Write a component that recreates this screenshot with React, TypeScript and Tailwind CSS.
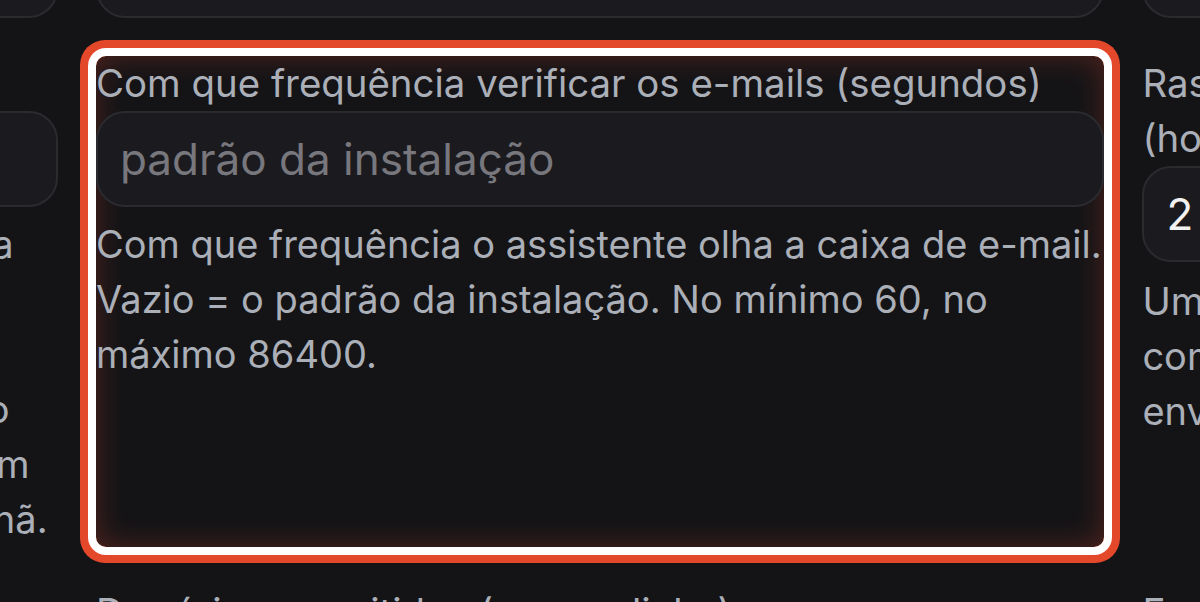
import React from 'react';

// Campo em foco, mostrado com zoom sobre a grade de configurações
const font = { fontFamily: 'Inter, "Noto Sans", sans-serif' };

function Input({ placeholder, value }: { placeholder?: string; value?: string }) {
  return (
    <div className="flex h-[96px] items-center rounded-[29px] border-2 border-[#2a2a2f] bg-[#1b1b1f] px-[22px]">
      {value ? (
        <span className="text-[44px] text-[#f2f2f2]">{value}</span>
      ) : (
        <span className="text-[44px] text-[#77777d]">{placeholder}</span>
      )}
    </div>
  );
}

function Lines({ lines }: { lines: { text: string; pr: string }[] }) {
  return (
    <div className="mt-[9.6px] text-[38px] leading-[55px] text-[#abafb7]">
      {lines.map((l, i) => (
        <span key={i} className={`block whitespace-nowrap text-right ${l.pr}`}>
          {l.text}
        </span>
      ))}
    </div>
  );
}

export default function App() {
  return (
    <div className="h-[602px] w-[1200px] overflow-hidden bg-[#141417]" style={font}>
      <div className="flex justify-center">
        <div className="mt-[-78px] grid shrink-0 grid-cols-[1008px_1008px_1008px] gap-x-[38.4px] gap-y-[38.4px]">
          {/* linha anterior */}
          <div className="h-[96px] rounded-[29px] border-2 border-[#2a2a2f] bg-[#1b1b1f]" />
          <div className="h-[96px] rounded-[29px] border-2 border-[#2a2a2f] bg-[#1b1b1f]" />
          <div className="h-[96px] rounded-[29px] border-2 border-[#2a2a2f] bg-[#1b1b1f]" />

          {/* coluna da esquerda */}
          <div className="flex flex-col">
            <label className="text-[38.4px] leading-[55px] text-[#abafb7]">Hora do resumo</label>
            <Input placeholder="08:00" />
            <Lines
              lines={[
                { text: 'O resumo chega na caixa de entrada', pr: 'pr-[44px]' },
                { text: 'logo cedo, antes do expediente,', pr: 'pr-[1040px]' },
                { text: 'mesmo nos fins de semana,', pr: 'pr-[1040px]' },
                { text: 'no fuso horário do perfil do', pr: 'pr-[48px]' },
                { text: 'usuário. Se ficar vazio, nenhum', pr: 'pr-[28px]' },
                { text: 'resumo sai até amanhã.', pr: 'pr-[10px]' },
              ]}
            />
          </div>

          {/* campo em foco */}
          <div className="flex flex-col rounded-[10px] shadow-[0_0_0_8px_#ffffff,0_0_0_16px_#e4482a,inset_0_0_30px_rgba(228,72,42,0.3)]">
            <label className="whitespace-nowrap text-[38.4px] leading-[55px] text-[#abafb7]">
              Com que frequência verificar os e-mails (segundos)
            </label>
            <Input placeholder="padrão da instalação" />
            <p className="mt-[9.6px] whitespace-nowrap text-[38px] leading-[55px] text-[#abafb7]">
              Com que frequência o assistente olha a caixa de e-mail.
              <br />
              Vazio = o padrão da instalação. No mínimo 60, no
              <br />
              máximo 86400.
            </p>
          </div>

          {/* coluna da direita */}
          <div className="flex flex-col">
            <label className="whitespace-nowrap text-[38.4px] leading-[55px] text-[#abafb7]">
              Rascunhos pendentes expiram depois de
              <br />
              (horas)
            </label>
            <Input value="2" />
            <p className="mt-[12px] whitespace-nowrap text-[38px] leading-[55px] text-[#abafb7]">
              Um rascunho sem aprovação é descartado,
              <br />
              com um aviso para quem pediu a resposta
              <br />
              enviado por e-mail.
            </p>
          </div>

          {/* próxima linha */}
          <label className="text-[38.4px] leading-[55px] text-[#abafb7]">Remetentes bloqueados</label>
          <label className="text-[38.4px] leading-[55px] text-[#abafb7]">
            Domínios permitidos (um por linha)
          </label>
          <label className="text-[38.4px] leading-[55px] text-[#abafb7]">Endereço de resposta</label>
        </div>
      </div>
    </div>
  );
}
